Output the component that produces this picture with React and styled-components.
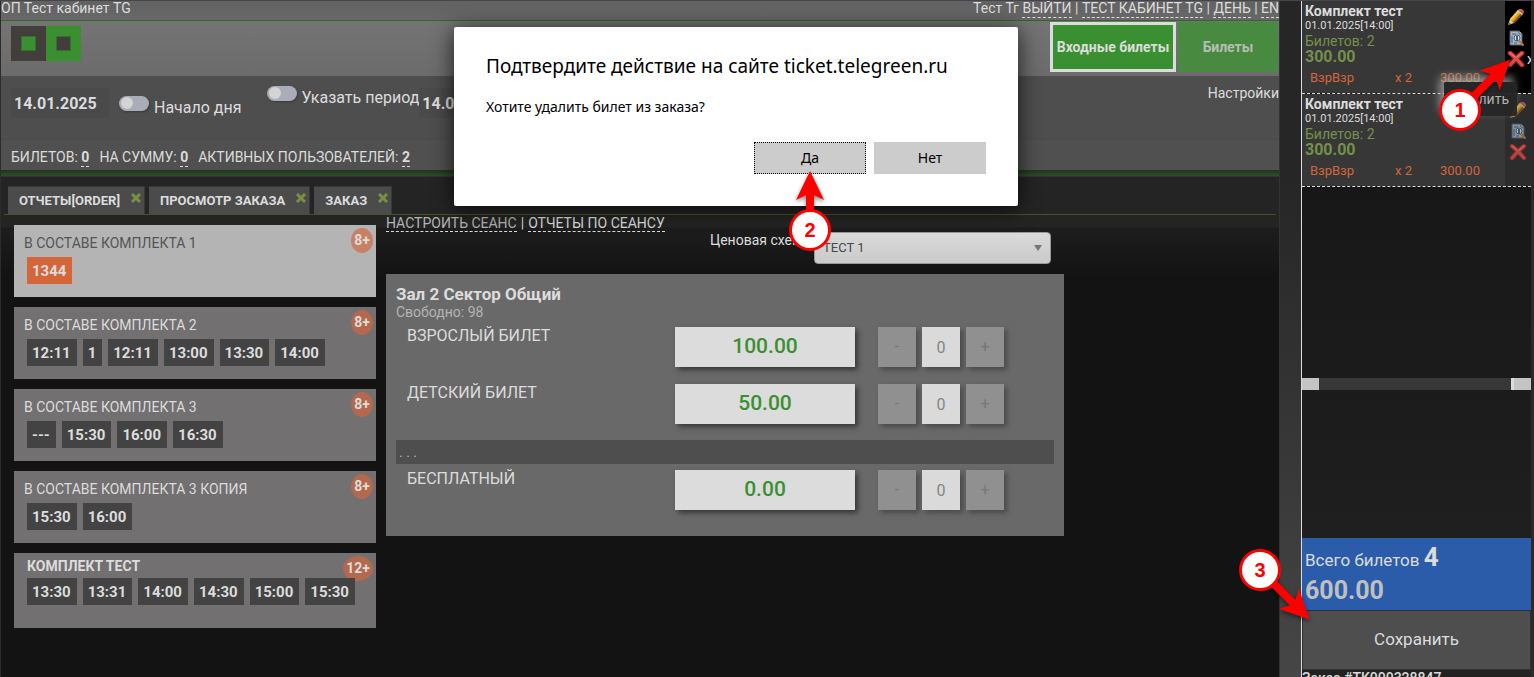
import { useState } from "react";
import styled, { createGlobalStyle } from "styled-components";

const GlobalStyle = createGlobalStyle`
  * { box-sizing: border-box; }
  body {
    margin: 0;
    background: #131313;
    color: #dcdcdc;
    font-family: Roboto, "Liberation Sans", sans-serif;
    font-size: 14px;
    line-height: 16px;
  }
  button, input, select { font: inherit; color: inherit; border: 0; border-radius: 0; margin: 0; padding: 0; }
  button { cursor: pointer; }
  a { color: inherit; text-decoration: none; }
`;

const Page = styled.div`
  position: relative;
  display: flex;
  height: 100vh;
  overflow: hidden;
  border-top: 1px solid #45454d;
`;

const Main = styled.main`
  flex: 1;
  min-width: 0;
  display: flex;
  flex-direction: column;
  overflow: hidden;
  white-space: nowrap;
  border-left: 1px solid #2c2c2c;
  background: linear-gradient(#262626 0, #242424 226px, #1d1d1d 227px, #131313 276px);
`;

const TopBar = styled.div`
  display: flex;
  justify-content: space-between;
  height: 20px;
  line-height: 14px;
  background: linear-gradient(#626262, #686868);
  border-bottom: 1px solid #2c6b22;
`;

const DashLink = styled.a`
  display: inline-block;
  height: 17px;
  border-bottom: 1px dashed #dcdcdc;
  color: ${(props) => props.$dim ? "#b4b4b4" : "#dcdcdc"};
`;

const Header = styled.header`
  display: flex;
  justify-content: space-between;
  height: 55px;
  padding: 1px 1px 0 10px;
  background: linear-gradient(#747474, #6b6b6b);
`;

const Logo = styled.svg`
  display: block;
  margin-top: 4px;
`;

const Modes = styled.nav`
  display: flex;
  gap: 2px;
`;

const ModeButton = styled.button`
  width: ${(props) => props.$active ? "126px" : "100px"};
  height: 50px;
  border: ${(props) => props.$active ? "3px solid #dcdcdc" : "0"};
  background: ${(props) => props.$active ? "#3a9030" : "#478a40"};
  color: ${(props) => props.$active ? "#dcdcdc" : "#b6beb5"};
  font-weight: bold;
`;

const Filters = styled.section`
  display: flex;
  align-items: flex-start;
  height: 63px;
  padding: 9px 0 0 10px;
  background: #4e4e4e;
`;

const DateInput = styled.input`
  width: 98px;
  height: 30px;
  margin-top: 3px;
  padding: 0 3px;
  background: #4a4a4a;
  font-size: 16px;
  font-weight: bold;
`;

const Toggle = styled.label`
  display: flex;
  align-items: flex-start;
  gap: 5px;
  margin: ${(props) => props.$low ? "11px 25px 0 10px" : "1px 0 0"};
  font-size: 16px;
  line-height: 24px;
  input {
    appearance: none;
    width: 30px;
    height: 15px;
    border-radius: 8px;
    background: #aaacb8;
    box-shadow: 1px 1px 2px #3a3a3a;
  }
  input::before {
    content: "";
    display: block;
    width: 12px;
    height: 12px;
    margin: 1px 2px;
    border-radius: 50%;
    background: #d4d4d4;
  }
  input:checked::before { margin-left: 16px; }
`;

const Settings = styled.a`
  margin-left: auto;
`;

const Stats = styled.section`
  display: flex;
  gap: 10px;
  height: 31px;
  padding: 9px 0 0 10px;
  border-top: 1px solid #4b4b4b;
  background: #505050;
  b {
    display: inline-block;
    height: 18px;
    border-bottom: 1px dashed #dcdcdc;
  }
`;

const GreenEdge = styled.div`
  flex-shrink: 0;
  height: 7px;
  background: linear-gradient(#243223, #2d4f29);
  border-bottom: 1px solid #333;
`;

const Tabs = styled.div`
  display: flex;
  gap: 4px;
  flex-shrink: 0;
  height: 38px;
  margin: 0 3px;
  padding: 9px 0 0 4px;
  border-bottom: 1px solid #44561f;
`;

const Tab = styled.div`
  display: flex;
  gap: 11px;
  height: 28px;
  padding: 0 3px 0 11px;
  background: #4b4b4b;
  border: 1px solid #383838;
  border-width: 1px 1px 0 0;
  font-size: 13px;
  font-weight: bold;
  line-height: 27px;
`;

const CloseTab = styled.button`
  width: 10px;
  height: 22px;
  background: none;
  svg { display: block; }
`;

const Work = styled.div`
  display: flex;
  gap: 10px;
  padding-left: 13px;
`;

const Shows = styled.div`
  display: flex;
  flex-direction: column;
  gap: 10px;
  width: 362px;
  padding-top: 10px;
`;

const ShowCard = styled.article`
  position: relative;
  padding: ${(props) => props.$bold ? "5px 0 23px 13px" : "10px 0 13px 13px"};
  background: ${(props) => props.$active ? "#b4b4b4" : "#727070"};
  color: ${(props) => props.$active ? "#555" : "#dcdcdc"};
`;

const ShowName = styled.h3`
  margin: ${(props) => props.$bold ? "0 0 4px" : "0 0 6px -3px"};
  font-size: 14px;
  font-weight: ${(props) => props.$bold ? "bold" : "normal"};
`;

const Times = styled.div`
  position: relative;
  z-index: 1;
  display: flex;
  gap: 6px;
`;

const TimeButton = styled.button`
  height: 27px;
  padding: 0 6px 0 5px;
  background: ${(props) => props.$active ? "#d4663a" : "#434343"};
  color: #dcdcdc;
  font-size: 15px;
  font-weight: bold;
`;

const Age = styled.span`
  position: absolute;
  top: 3px;
  right: 3px;
  padding: 0 3px;
  border-radius: 50%;
  background: rgba(212, 102, 58, 0.65);
  color: #dcdcdc;
  font-weight: bold;
  line-height: 25px;
`;

const Session = styled.section`
  width: 678px;
`;

const SessionLinks = styled.div`
  display: flex;
  gap: 4px;
`;

const Scheme = styled.div`
  display: flex;
  justify-content: flex-end;
  gap: 4px;
  margin: 0 13px 10px 0;
`;

const SelectBox = styled.div`
  display: flex;
  align-items: center;
  width: 237px;
  height: 32px;
  border: 1px solid #999;
  border-radius: 4px;
  background: linear-gradient(#dadada, #cacaca);
  select {
    flex: 1;
    height: 30px;
    padding-left: 8px;
    appearance: none;
    background: none;
    color: #484848;
    font-size: 13px;
  }
  svg { margin-right: 8px; }
`;

const Hall = styled.div`
  padding: 10px 10px 26px;
  background: #696969;
`;

const HallName = styled.h2`
  margin: 0;
  font-size: 17px;
  line-height: 21px;
`;

const Free = styled.div`
  margin-bottom: 7px;
  line-height: 15px;
  color: #b4b4b4;
`;

const TicketRow = styled.div`
  display: flex;
  align-items: flex-start;
  margin-bottom: ${(props) => props.$gap || 0}px;
  font-size: 16px;
`;

const TicketName = styled.span`
  flex: 1;
  padding-left: 11px;
  line-height: 18px;
`;

const Price = styled.button`
  width: 180px;
  height: 40px;
  padding-bottom: 2px;
  background: #dcdcdc;
  box-shadow: 3px 3px 5px #383838;
  color: #3a9030;
  font-size: 21px;
  font-weight: 500;
`;

const Stepper = styled.div`
  display: flex;
  gap: 6px;
  margin: 0 50px 0 23px;
  button, input {
    width: 38px;
    height: 40px;
    background: #909090;
    box-shadow: 3px 3px 5px #4a4a4a;
    color: #777;
    text-align: center;
  }
  input {
    background: #dadadb;
    color: #858585;
  }
`;

const More = styled.button`
  display: block;
  width: 100%;
  height: 24px;
  margin-bottom: 6px;
  padding-left: 3px;
  background: #4e4e4e;
  color: #b4b4b4;
  text-align: left;
`;

const Gutter = styled.div`
  width: 22px;
  border-left: 1px solid #333;
  background: linear-gradient(#262626 180px, #464646);
`;

const Sidebar = styled.aside`
  position: relative;
  width: 233px;
  display: flex;
  flex-direction: column;
  border-left: 1px solid #dcdcdc;
  border-right: 3px solid #2b2b2e;
  background: linear-gradient(#171717 180px, #222);
`;

const OrderItem = styled.article`
  display: flex;
  border-bottom: 1px dashed #dcdcdc;
`;

const OrderInfo = styled.div`
  flex: 1;
  height: 92px;
  padding: 2px 3px 0;
  background: #373737;
  h4 { margin: 0; font-size: 14px; }
  time { display: block; font-size: 11px; line-height: 14px; }
  p { margin: 0; line-height: 16px; color: #74904a; }
  strong { display: block; line-height: 15px; font-size: 16px; color: #74904a; }
`;

const OrderLine = styled.div`
  display: grid;
  grid-template-columns: 85px 45px auto;
  padding: 6px 5px 0;
  color: #d4663a;
  font-size: 13px;
`;

const OrderActions = styled.div`
  display: grid;
  grid-template-columns: 18px 6px;
  grid-auto-rows: 16px;
  gap: 5px 2px;
  width: 26px;
  padding: 8px 0 0 ${(props) => props.$hover ? "2px" : "4px"};
  overflow: hidden;
  background: ${(props) => props.$hover ? "#000" : "#2c2c2c"};
  button {
    grid-column: 1;
    width: 18px;
    height: 16px;
    background: none;
    opacity: ${(props) => props.$hover ? 1 : 0.75};
  }
  span { grid-column: 2; }
  svg { display: block; }
`;

const Scroll = styled.div`
  display: flex;
  justify-content: space-between;
  flex-shrink: 0;
  height: 12px;
  margin: 191px 0 148px;
  background: #373737;
  button { width: 17px; height: 12px; background: #c4c4c4; }
  button + button { width: 20px; border-left: 3px solid #dcdcdc; }
`;

const Total = styled.div`
  flex-shrink: 0;
  height: 72px;
  padding: 3px;
  background: #2b5caa;
  font-size: 17px;
  line-height: 32px;
  b { font-size: 26px; }
  strong { display: block; color: #c0c0c0; font-size: 25px; line-height: 30px; }
`;

const SaveButton = styled.button`
  height: 60px;
  flex-shrink: 0;
  padding-bottom: 2px;
  border: 1px solid #303030;
  background: #4e4e4e;
  font-size: 17px;
`;

const OrderNumber = styled.div`
  flex-shrink: 0;
  background: #222;
  font-weight: 500;
`;

const Tooltip = styled.div`
  position: absolute;
  top: 81px;
  right: 14px;
  width: 73px;
  padding: 9px 8px;
  border-radius: 2px;
  background: rgba(38, 38, 38, 0.95);
  box-shadow: -4px -5px 10px rgba(180, 180, 180, 0.8);
  color: #b4b4b4;
  text-align: right;
`;

const DialogLayer = styled.div`
  position: absolute;
  inset: 26px 62px auto 0;
  display: flex;
  justify-content: center;
  pointer-events: none;
`;

const Dialog = styled.div`
  position: relative;
  width: 564px;
  padding: 25px 32px 32px;
  border-radius: 2px;
  background: #fff;
  box-shadow: 0 3px 22px rgba(0, 0, 0, 0.75);
  color: #000;
  font-family: "Noto Sans", "Open Sans", sans-serif;
  pointer-events: auto;
  h1 { margin: 0 0 17px; font-size: 19px; font-weight: normal; line-height: 28px; }
  p { margin: 0 0 25px; line-height: 20px; }
`;

const DialogButtons = styled.div`
  display: flex;
  justify-content: flex-end;
  gap: 8px;
  button {
    width: 112px;
    height: 32px;
    background: #ccc;
  }
  button:first-child { border: 1px dotted #000; }
`;

const CalloutBox = styled.div`
  position: absolute;
  z-index: 5;
  width: 42px;
  height: 42px;
  pointer-events: none;
  svg {
    position: absolute;
    overflow: visible;
    filter: drop-shadow(0 2px 2px rgba(0, 0, 0, 0.5));
  }
  span {
    position: relative;
    display: block;
    border: 3px solid #f00;
    border-radius: 50%;
    background: #fff;
    color: #f00;
    font: bold 20px/36px "Liberation Sans", sans-serif;
    text-align: center;
  }
`;

const DeleteCallout = styled(CalloutBox)`
  top: 88px;
  right: 53px;
`;

const YesCallout = styled(CalloutBox)`
  top: 182px;
  left: 335px;
`;

const SaveCallout = styled(CalloutBox)`
  top: 548px;
  right: 253px;
`;

function Arrow({ angle, length }) {
  return (
    <svg width="42" height="42" aria-hidden="true">
      <path
        fill="#f00"
        transform={`translate(21 21) rotate(${angle}) translate(0 ${-length})`}
        d={`M0 0 L14 29 L4 24 V${length} H-4 V24 L-14 29 Z`}
      />
    </svg>
  );
}

function CrossIcon() {
  return (
    <svg width="18" height="16" viewBox="0 0 18 16">
      <path d="M3 2 Q8 6 15 14 M15 2 Q9 7 3 14" fill="none" stroke="#8e2420" strokeWidth="5" strokeLinecap="round" />
      <path d="M3 2 Q8 6 15 14 M15 2 Q9 7 3 14" fill="none" stroke="#e0504a" strokeWidth="3" strokeLinecap="round" />
      <path d="M3 2 L8 6 M15 2 L10 6" stroke="#ee8078" strokeWidth="1" strokeLinecap="round" />
    </svg>
  );
}

function PencilIcon() {
  return (
    <svg width="18" height="16" viewBox="0 0 18 16">
      <path d="M1 16 L3 10 L7 14 Z" fill="#e8c898" />
      <path d="M1 16 L2 13 L4 15 Z" fill="#806040" />
      <path d="M3 10 L11 1 L16 5 L7 14 Z" fill="#e0a020" />
      <path d="M3 10 L11 1 L13 2 L4 12 Z" fill="#f4d050" />
      <path d="M6 13 L14 4 L16 5 L7 14 Z" fill="#8c5410" />
      <path d="M10 2 L11 1 L16 5 L15 6 Z" fill="#c8c8c8" />
      <path d="M11 1 L12 0 Q14 -1 16 1 Q18 3 16 5 Z" fill="#c8604c" />
    </svg>
  );
}

function PreviewIcon() {
  return (
    <svg width="18" height="16" viewBox="0 0 18 16">
      <path d="M3 1 H12 L15 4 V15 H3 Z" fill="#a8b4c0" stroke="#4a6078" />
      <path d="M12 1 V4 H15" fill="#dce4ec" stroke="#4a6078" />
      <path d="M5 4 H9 M5 6 V13 M7 13 H10" stroke="#3f5f80" />
      <circle cx="10" cy="8" r="3" fill="#d4e2ee" stroke="#3f5f80" />
      <path d="M10 6 V11" stroke="#3f5f80" strokeWidth="2" />
      <path d="M12 11 L16 15" stroke="#c07848" strokeWidth="2" strokeLinecap="round" />
    </svg>
  );
}

const shows = [
  { name: "В СОСТАВЕ КОМПЛЕКТА 1", age: "8+", times: ["1344"], active: true },
  { name: "В СОСТАВЕ КОМПЛЕКТА 2", age: "8+", times: ["12:11", "1", "12:11", "13:00", "13:30", "14:00"] },
  { name: "В СОСТАВЕ КОМПЛЕКТА 3", age: "8+", times: ["---", "15:30", "16:00", "16:30"] },
  { name: "В СОСТАВЕ КОМПЛЕКТА 3 КОПИЯ", age: "8+", times: ["15:30", "16:00"] },
  { name: "КОМПЛЕКТ ТЕСТ", age: "12+", times: ["13:30", "13:31", "14:00", "14:30", "15:00", "15:30"], bold: true },
];

function Ticket({ name, price, gap }) {
  let [count, setCount] = useState(0);

  return (
    <TicketRow $gap={gap}>
      <TicketName>{name}</TicketName>
      <Price>{price}</Price>
      <Stepper>
        <button onClick={() => setCount(Math.max(0, count - 1))}>-</button>
        <input aria-label={name} value={count} onChange={(e) => setCount(Number(e.target.value) || 0)} />
        <button onClick={() => setCount(count + 1)}>+</button>
      </Stepper>
    </TicketRow>
  );
}

function Order({ hover }) {
  return (
    <OrderItem>
      <OrderInfo>
        <h4>Комплект тест</h4>
        <time>01.01.2025[14:00]</time>
        <p>Билетов: 2</p>
        <strong>300.00</strong>
        <OrderLine>
          <span>ВзрВзр</span>
          <span>x 2</span>
          <span>300.00</span>
        </OrderLine>
      </OrderInfo>
      <OrderActions $hover={hover}>
        <button aria-label="Изменить"><PencilIcon /></button>
        <button aria-label="Просмотр"><PreviewIcon /></button>
        <button aria-label="Удалить"><CrossIcon /></button>
        { hover ? <span>x</span> : null }
      </OrderActions>
    </OrderItem>
  );
}

function App() {
  let [dialog, setDialog] = useState(true);
  let [tabs, setTabs] = useState(["ОТЧЕТЫ[ORDER]", "ПРОСМОТР ЗАКАЗА", "ЗАКАЗ"]);

  return (
    <Page>
      <GlobalStyle />
      <Main>
        <TopBar>
          <span>ОП Тест кабинет TG</span>
          <span>
            Тест Тг <DashLink href="#">ВЫЙТИ</DashLink> | <DashLink href="#">ТЕСТ КАБИНЕТ TG</DashLink>
            {" | "}<DashLink href="#">ДЕНЬ</DashLink> | <DashLink href="#">EN</DashLink>
          </span>
        </TopBar>
        <Header>
          <Logo width="70" height="35">
            <path d="M0 0H35V35H0Z" fill="#423e3b" />
            <path d="M35 0H70V35H35Z" fill="#3a9030" />
            <path d="M10.500 10.500H24.500V24.500H10.500Z" fill="#3a9030" stroke="#36702f" />
            <path d="M45.500 10.500H59.500V24.500H45.500Z" fill="#423e3b" stroke="#36702f" />
          </Logo>
          <Modes>
            <ModeButton $active>Входные билеты</ModeButton>
            <ModeButton>Билеты</ModeButton>
          </Modes>
        </Header>
        <Filters>
          <DateInput aria-label="Дата" defaultValue="14.01.2025" />
          <Toggle $low><input type="checkbox" />Начало дня</Toggle>
          <Toggle><input type="checkbox" />Указать период</Toggle>
          <DateInput aria-label="Дата окончания" defaultValue="14.01.2025" />
          <Settings href="#">Настройки</Settings>
        </Filters>
        <Stats>
          <span>БИЛЕТОВ: <b>0</b></span>
          <span>НА СУММУ: <b>0</b></span>
          <span>АКТИВНЫХ ПОЛЬЗОВАТЕЛЕЙ: <b>2</b></span>
        </Stats>
        <GreenEdge />
        <Tabs>
          {tabs.map((x) => (
            <Tab key={x}>
              <span>{x}</span>
              <CloseTab aria-label="Закрыть" onClick={() => setTabs(tabs.filter((t) => t !== x))}>
                <svg width="10" height="10"><path d="M1 1L9 9M9 1L1 9" stroke="#789040" strokeWidth="3" /></svg>
              </CloseTab>
            </Tab>
          ))}
        </Tabs>
        <Work>
          <Shows>
            {shows.map((show) => (
              <ShowCard key={show.name} $active={show.active} $bold={show.bold}>
                <ShowName $bold={show.bold}>{show.name}</ShowName>
                <Age>{show.age}</Age>
                <Times>
                  {show.times.map((time, i) => (
                    <TimeButton key={i} $active={show.active}>{time}</TimeButton>
                  ))}
                </Times>
              </ShowCard>
            ))}
          </Shows>
          <Session>
            <SessionLinks>
              <DashLink href="#" $dim>НАСТРОИТЬ СЕАНС</DashLink>|
              <DashLink href="#">ОТЧЕТЫ ПО СЕАНСУ</DashLink>
            </SessionLinks>
            <Scheme>
              <label htmlFor="scheme">Ценовая схема</label>
              <SelectBox>
                <select id="scheme"><option>ТЕСТ 1</option></select>
                <svg width="8" height="6"><path d="M0 0H8L4 6Z" fill="#777" /></svg>
              </SelectBox>
            </Scheme>
            <Hall>
              <HallName>Зал 2 Сектор Общий</HallName>
              <Free>Свободно: 98</Free>
              <Ticket name="ВЗРОСЛЫЙ БИЛЕТ" price="100.00" gap={17} />
              <Ticket name="ДЕТСКИЙ БИЛЕТ" price="50.00" gap={16} />
              <More>. . .</More>
              <Ticket name="БЕСПЛАТНЫЙ" price="0.00" />
            </Hall>
          </Session>
        </Work>
      </Main>
      <Gutter />
      <Sidebar>
        <Order hover />
        <Order />
        <Tooltip role="tooltip">Удалить</Tooltip>
        <Scroll>
          <button aria-label="Влево" />
          <button aria-label="Вправо" />
        </Scroll>
        <Total>
          Всего билетов <b>4</b>
          <strong>600.00</strong>
        </Total>
        <SaveButton>Сохранить</SaveButton>
        <OrderNumber>Заказ #TK000328847</OrderNumber>
      </Sidebar>
      {
        dialog ?
        <DialogLayer>
          <Dialog role="dialog" aria-labelledby="confirm-title">
            <h1 id="confirm-title">Подтвердите действие на сайте ticket.telegreen.ru</h1>
            <p>Хотите удалить билет из заказа?</p>
            <DialogButtons>
              <button onClick={() => setDialog(false)}>Да</button>
              <button onClick={() => setDialog(false)}>Нет</button>
            </DialogButtons>
            <YesCallout><Arrow angle={0} length={59} /><span>2</span></YesCallout>
          </Dialog>
        </DialogLayer>
        : null
      }
      <DeleteCallout><Arrow angle={45} length={71} /><span>1</span></DeleteCallout>
      <SaveCallout><Arrow angle={135} length={70} /><span>3</span></SaveCallout>
    </Page>
  );
}

export default App;
